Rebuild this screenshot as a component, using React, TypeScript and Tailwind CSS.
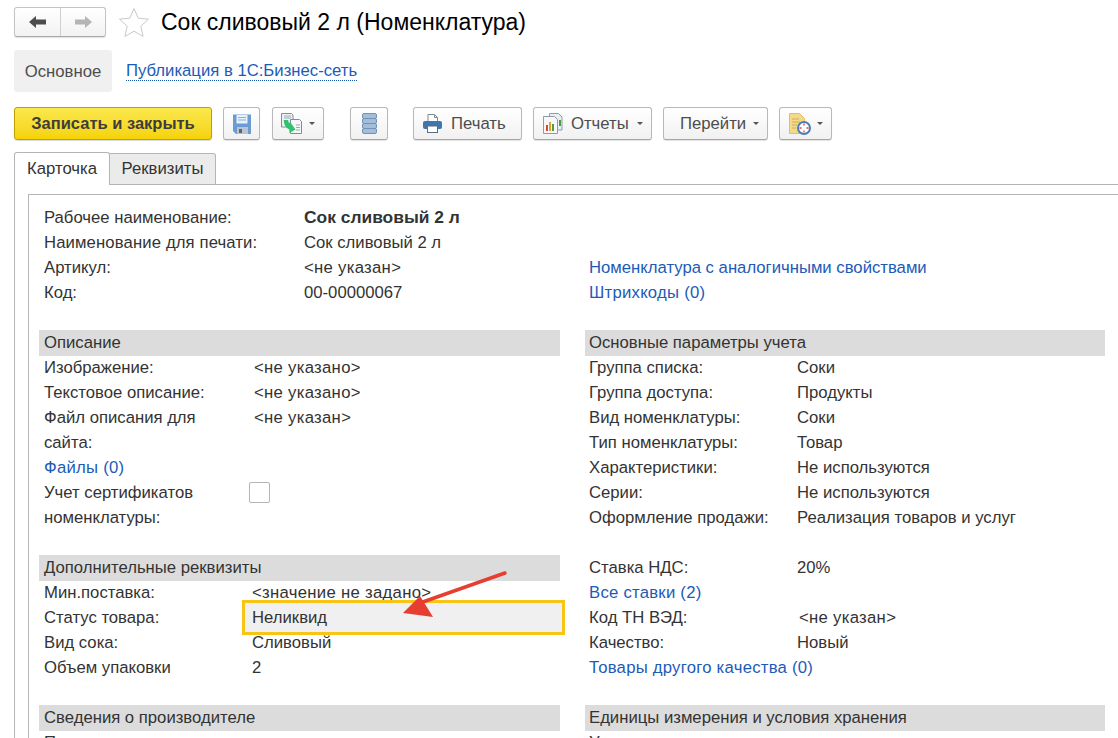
import { ReactNode } from 'react'

const linkColor = 'text-[#1c5bb8]'

function Caret() {
  return <span className="ml-auto h-0 w-0 border-x-[3px] border-t-[3px] border-x-transparent border-t-[#555]" />
}

function ToolButton({ className, children }: { className: string; children: ReactNode }) {
  return (
    <div className={`flex h-[33px] shrink-0 items-center rounded-[3px] border border-[#b9b9b9] border-b-[#a5a5a5] bg-gradient-to-b from-white to-[#f1f1f1] text-[#4d4d4d] shadow-[0_1px_1px_rgba(0,0,0,0.12)] ${className}`}>
      {children}
    </div>
  )
}

function SectionHeader({ children }: { children: ReactNode }) {
  return <div className="-mb-px flex h-[26px] items-center bg-[#dcdcdc] pl-[5px] text-[#333]">{children}</div>
}

function Row({ label, value, labelWidth, link, spaced }: { label?: string; value?: ReactNode; labelWidth?: string; link?: string; spaced?: boolean }) {
  return (
    <div className="flex h-[25px] items-center pl-[5px]">
      {link ? (
        <span className={`${linkColor} whitespace-nowrap ${spaced ? 'tracking-[0.25px]' : ''}`}>{link}</span>
      ) : (
        <span className={`${labelWidth} shrink-0 whitespace-nowrap ${spaced ? 'tracking-[0.12px]' : ''}`}>{label}</span>
      )}
      <span className="whitespace-nowrap">{value}</span>
    </div>
  )
}

function Empty({ children }: { children: ReactNode }) {
  return <span className="tracking-[0.3px]">{children}</span>
}

function SaveIcon() {
  return (
    <svg width="18" height="20" viewBox="0 0 18 20">
      <path d="M0 0.500h18v19.500h-15l-3-3z" fill="#6b9bd2" />
      <rect x="3.500" y="1" width="11" height="8.500" fill="#e6f0fa" />
      <path d="M5 3.500h8M5 6h8" stroke="#8bb0d6" />
      <rect x="4" y="13" width="11" height="7" fill="#b9c4cf" />
      <rect x="6" y="15" width="3" height="4" fill="#55677a" />
    </svg>
  )
}

function CopyIcon() {
  return (
    <svg width="21" height="21" viewBox="0 0 21 21">
      <path d="M0.500 0.500h10l1.500 1.500v12h-11.500z" fill="#eef1f4" stroke="#7f8c99" />
      <path d="M3 3h7M3 5h7" stroke="#9aa7b4" />
      <path d="M9.500 6.500h9l2 2v12h-11z" fill="#f4f6f8" stroke="#7f8c99" />
      <path d="M15 12h4M15 14.500h4M15 17h4" stroke="#9aa7b4" />
      <path d="M5 7c0 4 1.500 6.500 5 8" fill="none" stroke="#2fc46b" strokeWidth="4.500" />
      <path d="M8 9.500h1.500l5 7-6 3.500z" fill="#2fc46b" />
    </svg>
  )
}

function ListIcon() {
  return (
    <svg width="15" height="21" viewBox="0 0 15 21">
      {[0.500, 5.500, 10.500, 15.500].map((y) => (
        <rect key={y} x="0.500" y={y} width="14" height="5" rx="1.500" fill="#a3bddb" stroke="#7092b6" />
      ))}
    </svg>
  )
}

function PrintIcon() {
  return (
    <svg width="19" height="19" viewBox="0 0 19 19">
      <path d="M5 7.500V0.500h6.500l3 3v4z" fill="#fff" stroke="#7c8894" />
      <path d="M11.500 1v2.500h3" fill="none" stroke="#7c8894" />
      <rect x="0" y="7" width="19" height="8" rx="2" fill="#3f76ab" />
      <rect x="4.500" y="12" width="10" height="6.500" fill="#fff" stroke="#5c6c7c" />
    </svg>
  )
}

function ReportIcon() {
  return (
    <svg width="21" height="21" viewBox="0 0 21 21">
      <path d="M7.500 0.500h9l3.500 3.500v13h-12.500z" fill="#e8eef3" stroke="#8f9ca8" />
      <rect x="17" y="7" width="2" height="6" fill="#4a9d4a" />
      <path d="M1.500 3.500h11l3 3v14h-14z" fill="#f7f7f7" stroke="#8f9ca8" />
      <rect x="4" y="12" width="2" height="6" fill="#d9453a" />
      <rect x="7" y="9" width="2" height="9" fill="#e3a32c" />
      <rect x="10" y="11" width="2" height="7" fill="#4a9d4a" />
    </svg>
  )
}

function DocClockIcon() {
  return (
    <svg width="22" height="22" viewBox="0 0 22 22">
      <path d="M0.500 0.500h10l5 5v15h-15z" fill="#f3d98a" stroke="#e0c060" />
      <path d="M3 6h7M3 9h8M3 12h5M3 15h4" stroke="#cfae55" />
      <circle cx="15" cy="15" r="6" fill="#fff" stroke="#4a7ebb" strokeWidth="2" />
      <path d="M15 10.500v2M15 17.500v2M10.500 15h2M17.500 15h2" stroke="#e0453a" strokeWidth="1.300" />
    </svg>
  )
}

export default function App() {
  return (
    <div className="h-[738px] w-[1118px] overflow-hidden bg-white pl-[14px] pt-[7px] font-['Liberation_Sans',Arial,sans-serif] text-[16.7px] text-[#333]">
      <div className="flex h-[30px] items-center">
        <div className="flex h-[30px] w-[92px] rounded-[3px] border border-[#c4c4c4] border-b-[#a9a9a9] bg-gradient-to-b from-white to-[#f2f2f2] shadow-[0_1px_1px_rgba(0,0,0,0.12)]">
          <div className="flex w-[46px] items-center justify-center border-r border-[#d0d0d0]">
            <svg width="18" height="12" viewBox="0 0 18 12"><path d="M0 6l7-6v3.500h10v5H7V12z" fill="#4d4d4d" /></svg>
          </div>
          <div className="flex flex-1 items-center justify-center">
            <svg width="18" height="12" viewBox="0 0 18 12"><path d="M18 6l-7-6v3.500H1v5h10V12z" fill="#b5b5b5" /></svg>
          </div>
        </div>
        <svg className="ml-[12px]" width="32" height="30" viewBox="0 0 32 30">
          <path d="M16 1.500l4.300 9.700 10.200 1-7.700 7 2.300 10.300L16 24.200l-9.100 5.300 2.300-10.300-7.700-7 10.200-1z" fill="#fff" stroke="#c9c9c9" />
        </svg>
        <h1 className="ml-[11px] whitespace-nowrap text-[23px] font-normal text-black">Сок сливовый 2 л (Номенклатура)</h1>
      </div>

      <div className="mt-[13px] flex h-[42px] items-center">
        <div className="flex h-[42px] w-[98px] items-center justify-center rounded-[3px] bg-[#f0f0f0] pt-[1px] text-[#4d4d4d]">Основное</div>
        <span className={`ml-[14px] mt-[1px] border-b border-dotted border-[#1c5bb8] leading-[18px] ${linkColor}`}>Публикация в 1С:Бизнес-сеть</span>
      </div>

      <div className="mt-[15px] flex h-[33px] items-center">
        <div className="flex h-[33px] w-[198px] items-center justify-center rounded-[3px] border border-[#c0a000] bg-gradient-to-b from-[#fbe84a] to-[#f5d300] text-[16.5px] font-bold text-[#3d3d3d] shadow-[0_1px_1px_rgba(0,0,0,0.15)]">Записать и закрыть</div>
        <ToolButton className="ml-[11px] w-[37px] justify-center"><SaveIcon /></ToolButton>
        <ToolButton className="ml-[12px] w-[52px] pl-[8px] pr-[8px]"><CopyIcon /><Caret /></ToolButton>
        <ToolButton className="ml-[26px] w-[38px] justify-center"><ListIcon /></ToolButton>
        <ToolButton className="ml-[25px] w-[109px] pl-[9px]"><PrintIcon /><span className="ml-[9px]">Печать</span></ToolButton>
        <ToolButton className="ml-[11px] w-[119px] pl-[8px] pr-[8px]"><ReportIcon /><span className="ml-[8px]">Отчеты</span><Caret /></ToolButton>
        <ToolButton className="ml-[11px] w-[105px] pl-[16px] pr-[8px]"><span>Перейти</span><Caret /></ToolButton>
        <ToolButton className="ml-[11px] w-[53px] pl-[9px] pr-[8px]"><DocClockIcon /><Caret /></ToolButton>
      </div>

      <div className="relative z-10 mt-[12px] flex h-[33px] items-end">
        <div className="flex h-[33px] w-[96px] items-center justify-center rounded-t-[3px] border border-b-0 border-[#b5b5b5] bg-white">Карточка</div>
        <div className="flex h-[32px] w-[106px] items-center justify-center rounded-tr-[3px] border border-l-0 border-[#b5b5b5] bg-[#ebebeb]">Реквизиты</div>
      </div>

      <div className="-mt-px h-[600px] border-l border-t border-[#b5b5b5] pl-[13px] pt-[9px]">
        <div className="h-[600px] border-l border-t border-[#b5b5b5] pl-[10px] pr-[12px] pt-[10px]">
          <div className="grid grid-cols-[521px_520px] gap-x-[25px]">
            <div>
              <Row labelWidth="w-[260px]" label="Рабочее наименование:" value={<b className="text-[17.4px]">Сок сливовый 2 л</b>} />
              <Row labelWidth="w-[260px]" label="Наименование для печати:" spaced value="Сок сливовый 2 л" />
              <Row labelWidth="w-[260px]" label="Артикул:" value={<Empty>&lt;не указан&gt;</Empty>} />
              <Row labelWidth="w-[260px]" label="Код:" value="00-00000067" />
            </div>
            <div className="pt-[50px] [&>div]:pl-[4px]">
              <Row link="Номенклатура с аналогичными свойствами" />
              <Row link="Штрихкоды (0)" spaced />
            </div>

            <div className="mt-[25px]">
              <SectionHeader>Описание</SectionHeader>
              <Row labelWidth="w-[210px]" label="Изображение:" value={<Empty>&lt;не указано&gt;</Empty>} />
              <Row labelWidth="w-[210px]" label="Текстовое описание:" value={<Empty>&lt;не указано&gt;</Empty>} />
              <div className="flex h-[50px] pl-[5px] leading-[25px]">
                <span className="w-[210px] shrink-0">Файл описания для<br />сайта:</span>
                <Empty>&lt;не указан&gt;</Empty>
              </div>
              <Row link="Файлы (0)" spaced />
              <div className="flex h-[50px] pl-[5px] leading-[25px]">
                <span className="w-[205px] shrink-0">Учет сертификатов<br />номенклатуры:</span>
                <span className="mt-[2px] h-[21px] w-[21px] rounded-[2px] border border-[#b5b5b5] bg-white" />
              </div>
            </div>
            <div className="mt-[25px] [&>div]:pl-[4px]">
              <SectionHeader>Основные параметры учета</SectionHeader>
              <Row labelWidth="w-[208px]" label="Группа списка:" value="Соки" />
              <Row labelWidth="w-[208px]" label="Группа доступа:" value="Продукты" />
              <Row labelWidth="w-[208px]" label="Вид номенклатуры:" value="Соки" />
              <Row labelWidth="w-[208px]" label="Тип номенклатуры:" value="Товар" />
              <Row labelWidth="w-[208px]" label="Характеристики:" value="Не используются" />
              <Row labelWidth="w-[208px]" label="Серии:" value="Не используются" />
              <Row labelWidth="w-[208px]" label="Оформление продажи:" value="Реализация товаров и услуг" />
            </div>

            <div className="relative mt-[25px]">
              <SectionHeader>Дополнительные реквизиты</SectionHeader>
              <Row labelWidth="w-[208px]" label="Мин.поставка:" value={<Empty>&lt;значение не задано&gt;</Empty>} />
              <Row labelWidth="w-[208px]" label="Статус товара:" value="Неликвид" />
              <Row labelWidth="w-[208px]" label="Вид сока:" value="Сливовый" />
              <Row labelWidth="w-[208px]" label="Объем упаковки" value="2" />
              {/* highlight frame with the arrow drawn over the form */}
              <div className="absolute left-[203px] top-[45px] flex h-[35px] w-[323px] items-center border-[3px] border-[#f8c517] bg-[#f0f0f0] pl-[7px]">Неликвид</div>
              <svg className="absolute left-[360px] top-[10px]" width="115" height="58" viewBox="0 0 115 58">
                <path d="M106 8L21 38" stroke="#e63f32" strokeWidth="3.500" strokeLinecap="round" />
                <path d="M4 48L21 31L34 52z" fill="#e63f32" />
              </svg>
            </div>
            <div className="mt-[25px] [&>div]:pl-[4px]">
              <Row labelWidth="w-[208px]" label="Ставка НДС:" value="20%" />
              <Row link="Все ставки (2)" spaced />
              <Row labelWidth="w-[210px]" label="Код ТН ВЭД:" value={<Empty>&lt;не указан&gt;</Empty>} />
              <Row labelWidth="w-[208px]" label="Качество:" value="Новый" />
              <Row link="Товары другого качества (0)" spaced />
            </div>

            <div className="mt-[25px]">
              <SectionHeader>Сведения о производителе</SectionHeader>
              <Row labelWidth="w-[210px]" label="Производитель:" value="" />
            </div>
            <div className="mt-[25px] [&>div]:pl-[4px]">
              <SectionHeader>Единицы измерения и условия хранения</SectionHeader>
              <Row labelWidth="w-[208px]" label="Упаковка:" value="" />
            </div>
          </div>
        </div>
      </div>
    </div>
  )
}
